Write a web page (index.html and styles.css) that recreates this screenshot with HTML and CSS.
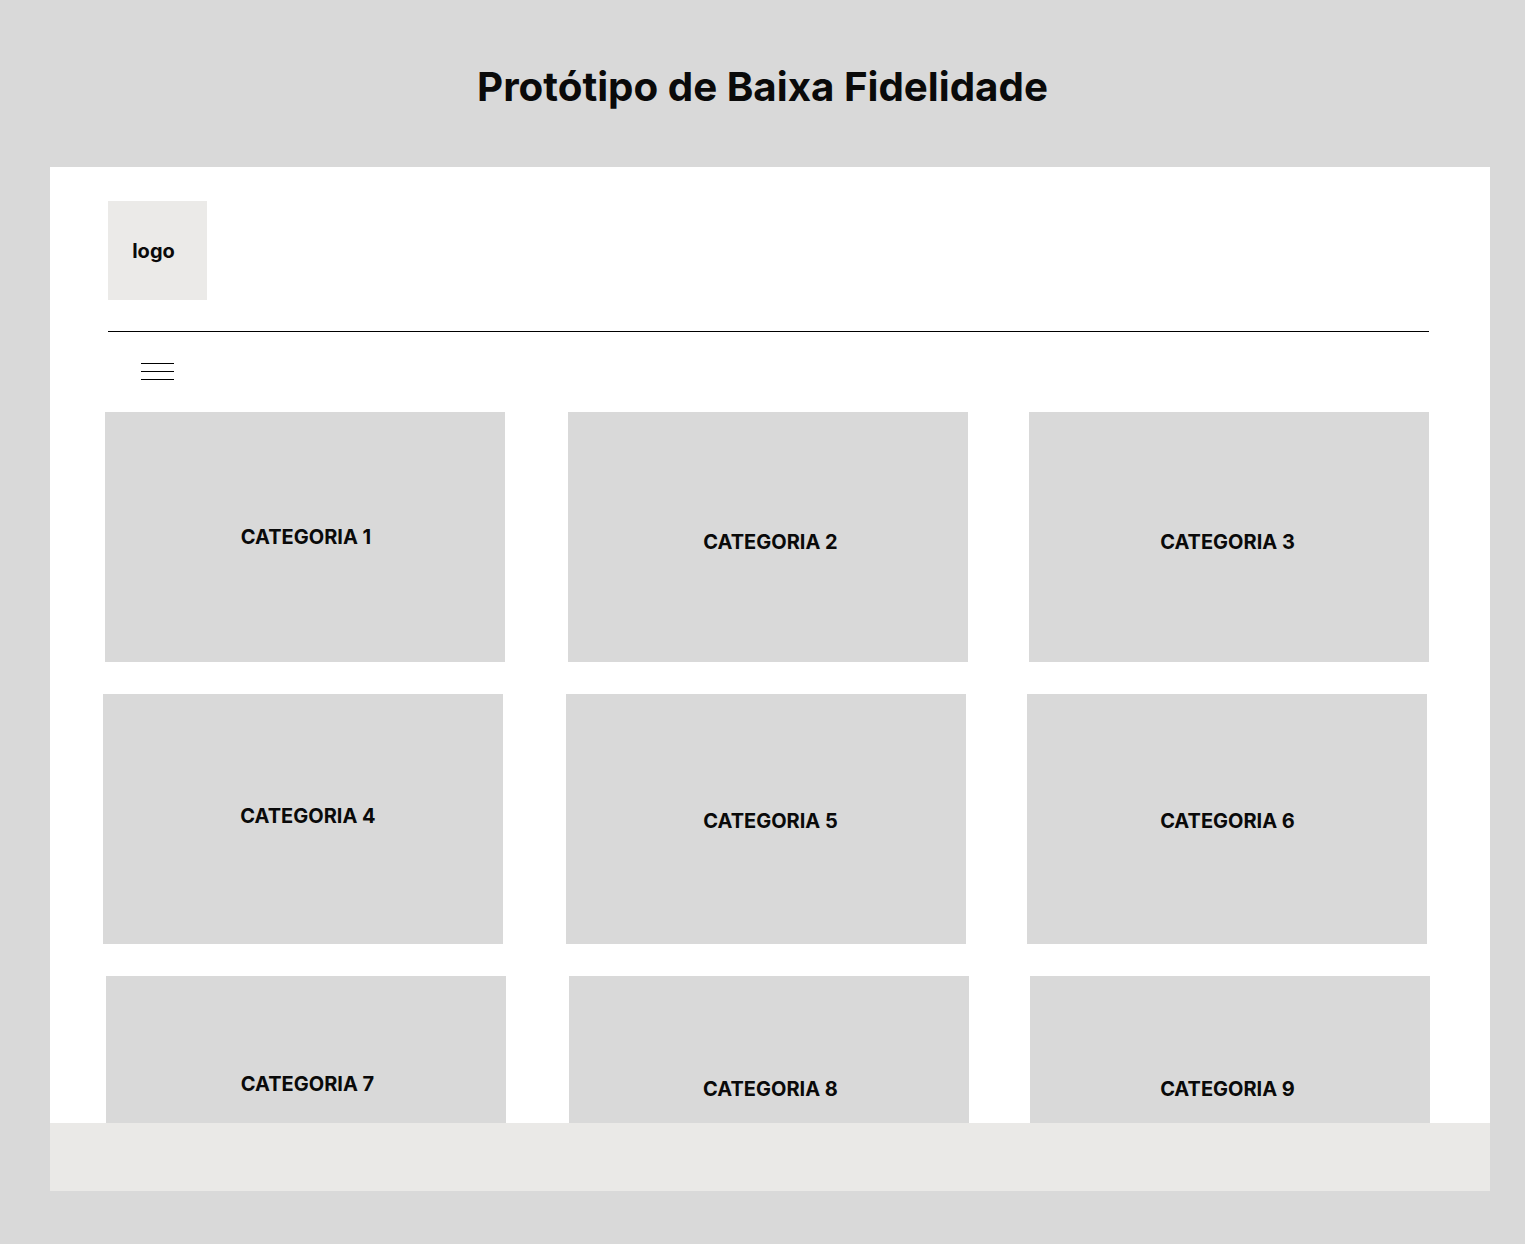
FILE: index.html
```html
<!DOCTYPE html>
<html lang="pt">
<head>
<meta charset="utf-8">
<title>Protótipo de Baixa Fidelidade</title>
<link rel="stylesheet" href="styles.css">
</head>
<body>
  <h1 class="title">Protótipo de Baixa Fidelidade</h1>
  <div class="frame">
    <header class="header">
      <div class="logo">logo</div>
    </header>
    <hr class="divider">
    <nav class="nav">
      <div class="menu">
        <span class="menu-line"></span>
        <span class="menu-line"></span>
        <span class="menu-line"></span>
      </div>
    </nav>
    <main class="content">
      <div class="grid">
        <div class="card r1 c1"><span class="label">CATEGORIA 1</span></div>
        <div class="card r1 c2"><span class="label">CATEGORIA 2</span></div>
        <div class="card r1 c3"><span class="label">CATEGORIA 3</span></div>
        <div class="card r2 c1"><span class="label">CATEGORIA 4</span></div>
        <div class="card r2 c2"><span class="label">CATEGORIA 5</span></div>
        <div class="card r2 c3"><span class="label">CATEGORIA 6</span></div>
        <div class="card r3 c1"><span class="label">CATEGORIA 7</span></div>
        <div class="card r3 c2"><span class="label">CATEGORIA 8</span></div>
        <div class="card r3 c3"><span class="label">CATEGORIA 9</span></div>
      </div>
    </main>
    <footer class="footer"></footer>
  </div>
</body>
</html>
```

FILE: styles.css
```css
* { box-sizing: border-box; }

body {
  margin: 0;
  background: #d9d9d9;
  font-family: Inter, "Noto Sans", sans-serif;
  color: #0a0a0a;
}

.title {
  margin: 63px 0 0;
  height: 48px;
  line-height: 48px;
  text-align: center;
  font-size: 40.3px;
  font-weight: 700;
}

.frame {
  margin: 56px 0 0 50px;
  width: 1440px;
  height: 1024px;
  background: #fff;
  display: flex;
  flex-direction: column;
  overflow: hidden;
}

.header {
  padding: 34px 0 0 58px;
}

.logo {
  width: 99px;
  height: 99px;
  background: #ebeae8;
  display: flex;
  align-items: center;
  justify-content: center;
  font-size: 20px;
  font-weight: 700;
  padding-right: 8px;
}

.divider {
  margin: 31px 61px 0 58px;
  border: 0;
  border-top: 1px solid #000;
  height: 0;
}

.nav {
  padding: 31px 0 0 91px;
}

.menu {
  width: 33px;
  display: flex;
  flex-direction: column;
  gap: 7px;
}

.menu-line {
  display: block;
  height: 1px;
  background: #000;
}

.content {
  flex: 1;
  min-height: 0;
  overflow: hidden;
  padding: 32px 0 0 55px;
}

.grid {
  display: grid;
  grid-template-columns: 463px 461px 400px;
  grid-auto-rows: 250px;
  row-gap: 32px;
}

.card {
  width: 400px;
  height: 250px;
  background: #d9d9d9;
  display: flex;
  justify-content: center;
  align-items: flex-start;
}

.label {
  display: block;
  line-height: 24px;
  font-size: 20px;
  font-weight: 700;
}

.r1.c1 { padding-top: 113px; padding-left: 2px; }
.r1.c2 { padding-top: 118px; padding-left: 5px; }
.r1.c3 { padding-top: 118px; padding-right: 3px; }
.r2 { margin-left: -2px; }
.r2.c1 { padding-top: 110px; padding-left: 10px; }
.r2.c2 { padding-top: 115px; padding-left: 9px; }
.r2.c3 { padding-top: 115px; padding-left: 1px; }
.r3 { margin-left: 1px; }
.r3.c1 { padding-top: 96px; padding-left: 3px; }
.r3.c2 { padding-top: 101px; padding-left: 3px; }
.r3.c3 { padding-top: 101px; padding-right: 5px; }

.footer {
  flex: none;
  height: 68px;
  background: #eae9e7;
}
```
